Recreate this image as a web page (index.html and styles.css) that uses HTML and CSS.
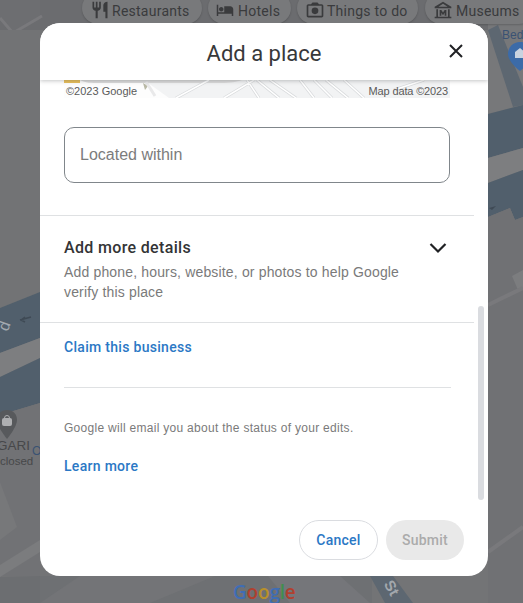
FILE: index.html
```html
<!DOCTYPE html>
<html lang="en">
<head>
<meta charset="utf-8">
<title>Add a place</title>
<link rel="stylesheet" href="styles.css">
</head>
<body>
<div class="map">
  <svg class="map-art" width="523" height="603" viewBox="0 0 523 603">
    <rect width="523" height="603" fill="#737476"/>
    <polygon points="0,0 523,0 523,30 0,30" fill="#6b6c6f"/>
    <polygon points="0,18 13,33 40,18 40,0 0,0" fill="#6d6e71"/>
    <polygon points="30,44 40,38 40,100 30,60" fill="#6f7073"/>
    <path d="M0 18 13 33 42 16M30 44l12-7" stroke="#79797c" stroke-width="3" fill="none"/>
    <polygon points="0,30 40,30 40,292 0,308" fill="#727375"/>
    <polygon points="0,308 40,292 40,338 0,353" fill="#515f6c"/>
    <polygon points="0,353 40,338 40,358 0,377" fill="#7d7e80"/>
    <polygon points="0,377 40,358 40,403 0,415" fill="#515f6c"/>
    <polygon points="0,415 40,403 40,576 0,576" fill="#717275"/>
    <polygon points="0,482 17,527 0,540" fill="#77787a"/>
    <polygon points="0,565 40,540 40,552 0,577" fill="#7b7c7e"/>
    <polygon points="0,577 40,576 40,603 0,603" fill="#6c6e71"/>
    <polygon points="488,23 523,23 523,105 488,114" fill="#77787a"/>
    <polygon points="488,30 498,25 523,87 523,105 513,107" fill="#5d6771"/>
    <polygon points="488,114 523,105 523,148 488,158" fill="#515f6c"/>
    <polygon points="488,158 523,148 523,170 488,183" fill="#7d7e80"/>
    <polygon points="488,183 523,170 523,217 515,220 510,208 488,217" fill="#515f6c"/>
    <polygon points="488,217 510,208 515,220 523,217 523,603 488,603" fill="#707174"/>
    <polygon points="512,276 523,270 523,290 518,290" fill="#7c7d7f"/>
    <path d="M488 305 523 288M488 552 523 527" stroke="#79797c" stroke-width="4" fill="none"/>
    <polygon points="40,576 372,576 372,603 40,603" fill="#6e7073"/>
    <polygon points="80,576 215,576 150,603 40,603" fill="#737477"/>
    <polygon points="268,576 340,576 370,603 290,603" fill="#75767a"/>
    <polygon points="370,576 393,576 413,603 385,603" fill="#5d6771"/>
    <path d="M520 42c-7 0-12 5-12 12 0 8 12 17 12 17s12-9 12-17c0-7-5-12-12-12z" fill="#3c6ba8"/>
    <path d="M515 58v-6l5-4 5 4v6z" fill="#c9d3e0"/>
    <path d="M7 410c-6 0-10 4-10 10 0 7 10 19 10 19s10-12 10-19c0-6-4-10-10-10z" fill="#57595c"/>
    <rect x="2" y="418" width="10" height="8" rx="2" fill="#aeafb1"/>
    <path d="M4.500 418a2.500 2.500 0 0 1 5 0" stroke="#aeafb1" fill="none"/>
    <path d="M20 320l11-3M21 320l4-3M21 320l4 2" stroke="#3f4a55" stroke-width="1.500" fill="none"/>
    <path d="M489 208l7-2-4 4z" fill="#3f4a55"/>
  </svg>
  <span class="map-label label-road-left">d</span>
  <span class="map-label label-gari">GARI</span>
  <span class="map-label label-closed">closed</span>
  <span class="map-label label-op">Op</span>
  <span class="map-label label-bed">Bed</span>
  <span class="map-label label-st">St</span>
  <div class="pills">
    <div class="pill pill-restaurants">
      <svg class="pill-icon" viewBox="0 0 24 24"><path d="M11 9H9V2H7v7H5V2H3v7c0 2.100 1.700 3.900 3.750 4V22h2.500v-9C11.300 12.900 13 11.100 13 9V2h-2v7zm5-3v8h2.500v8H21V2c-2.800 0-5 2.200-5 4z"/></svg>
      <span>Restaurants</span>
    </div>
    <div class="pill pill-hotels">
      <svg class="pill-icon" viewBox="0 0 24 24"><path d="M7 14c1.700 0 3-1.300 3-3S8.700 8 7 8s-3 1.300-3 3 1.300 3 3 3zm12-7h-8v8H3V5H1v15h2v-3h18v3h2v-9c0-2.200-1.800-4-4-4z"/></svg>
      <span>Hotels</span>
    </div>
    <div class="pill pill-things">
      <svg class="pill-icon" viewBox="0 0 24 24"><path d="M20 5h-3.200L15 3H9L7.200 5H4c-1.100 0-2 .9-2 2v12c0 1.100.9 2 2 2h16c1.100 0 2-.9 2-2V7c0-1.100-.9-2-2-2zm0 14H4V7h16v12z"/><circle cx="12" cy="13" r="4"/></svg>
      <span>Things to do</span>
    </div>
    <div class="pill pill-museums">
      <svg class="pill-icon" viewBox="0 0 24 24"><path d="M12 2 2 8v2h20V8L12 2zm0 2.400L17.500 8h-11L12 4.400zM4 11v9H2v2h20v-2h-2v-9h-2v9H6v-9H4z"/><path d="M8 12h2l2 3 2-3h2v7h-2v-3.600l-2 2.800-2-2.800V19H8z"/></svg>
      <span>Museums</span>
    </div>
  </div>
  <div class="google-logo"><span class="g-blue">G</span><span class="g-red">o</span><span class="g-yellow">o</span><span class="g-blue">g</span><span class="g-green">l</span><span class="g-red">e</span></div>
</div>

<section class="modal">
  <header class="modal-header">
    <h1 class="modal-title">Add a place</h1>
    <button class="close-btn" aria-label="Close">
      <svg viewBox="0 0 16 16" width="16" height="16"><path d="M2 2l12 12M14 2 2 14" stroke="#202124" stroke-width="2" fill="none"/></svg>
    </button>
  </header>
  <div class="modal-body">
    <div class="map-strip">
      <svg class="strip-art" viewBox="0 0 386 18" width="386" height="18">
        <rect width="386" height="18" fill="#f2f3f4"/>
        <polygon points="0,0 80,0 105,18 0,18" fill="#fdfdfd"/>
        <rect width="16" height="3" fill="#e8bf5a"/>
        <path d="M16 0c6 3 10 3 20 3h120c12 0 16-1 22-3z" fill="#dcdcdc"/>
        <path d="M112 18 145 0M160 18l30-18M195 18l-12-18M215 18l-22-18M232 18l-26-18M250 18l-14-18M268 18l-18-18M284 18l-22-18M300 18l-20-18M330 10l30-10" stroke="#d9dbdd" stroke-width="3" fill="none"/>
        <path d="M112 18 145 0M160 18l30-18M195 18l-12-18M215 18l-22-18M232 18l-26-18M250 18l-14-18M268 18l-18-18M284 18l-22-18M300 18l-20-18M330 10l30-10" stroke="#fff" stroke-width="1.500" fill="none"/>
        <path d="M79 3l2 7 3-4z" fill="#b9b9a6"/>
        <path d="M82 2l4 6 5 8" stroke="#e9e9ea" stroke-width="3" fill="none"/>
      </svg>
      <div class="strip-text">
        <span>©2023 Google</span>
        <span class="strip-right">Map data ©2023</span>
      </div>
    </div>
    <div class="field"><span class="field-label">Located within</span></div>
    <div class="rule rule-full rule-first"></div>
    <div class="details">
      <div class="details-head">
        <h2 class="details-title">Add more details</h2>
        <svg class="chevron" viewBox="0 0 18 12" width="18" height="12"><path d="M1.500 2 9 9.500 16.500 2" stroke="#202124" stroke-width="2.200" fill="none"/></svg>
      </div>
      <p class="details-text">Add phone, hours, website, or photos to help Google verify this place</p>
    </div>
    <div class="rule rule-full"></div>
    <a class="link claim" href="#">Claim this business</a>
    <div class="rule rule-inset"></div>
    <p class="notice">Google will email you about the status of your edits.</p>
    <a class="link learn" href="#">Learn more</a>
    <div class="scrollbar"></div>
  </div>
  <footer class="modal-footer">
    <button class="btn btn-cancel">Cancel</button>
    <button class="btn btn-submit">Submit</button>
  </footer>
</section>
</body>
</html>
```
FILE: styles.css
```css
* { box-sizing: border-box; }
html, body { margin: 0; padding: 0; }
body {
  position: relative;
  width: 523px;
  height: 603px;
  overflow: hidden;
  font-family: "Liberation Sans", Arial, sans-serif;
  background: #737476;
}
.map { position: absolute; inset: 0; overflow: hidden; }
.map-art { display: block; }
.map-label { position: absolute; line-height: 14px; white-space: nowrap; }
.label-road-left { left: 0; top: 319px; font-size: 16px; color: #a2a9b0; transform: rotate(-70deg); }
.label-gari { left: -3px; top: 439px; font-size: 13.500px; color: #47484a; }
.label-closed { left: 0; top: 454px; font-size: 11.500px; color: #47484a; }
.label-op { left: 32px; top: 444px; font-size: 12px; color: #3a5273; }
.label-bed { left: 502px; top: 28px; font-size: 12px; color: #3a5273; }
.label-st { left: 384px; top: 581px; font-size: 15px; font-weight: 700; color: #a3a8ad; transform: rotate(60deg); }
.pills { position: absolute; inset: 0; }
.pill {
  position: absolute;
  top: -8px;
  height: 32px;
  display: flex;
  align-items: center;
  gap: 2.500px;
  padding: 0 0 0 7.500px;
  border-radius: 16px;
  background: #78797b;
  box-shadow: 0 1px 2px rgba(0, 0, 0, .18);
  font-family: Roboto, sans-serif;
  font-size: 14px;
  letter-spacing: .25px;
  color: #3a3b3d;
  white-space: nowrap;
}
.pill > span { position: relative; top: 3px; }
.pill-icon { width: 20px; height: 20px; fill: #3a3b3d; position: relative; top: 2px; flex: none; }
.pill-restaurants { left: 82px; width: 120px; }
.pill-hotels { left: 208px; width: 83px; padding-left: 8px; gap: 4px; }
.pill-hotels .pill-icon { width: 18px; height: 18px; }
.pill-things { left: 297px; width: 121px; }
.pill-museums { left: 425px; width: 110px; gap: 3.500px; }
.google-logo {
  position: absolute;
  left: 233px;
  top: 580px;
  font-family: "Open Sans", sans-serif;
  font-size: 19px;
  line-height: 24px;
  font-weight: 600;
  letter-spacing: -.2px;
}
.g-blue { color: #3f6db5; }
.g-red { color: #b0402f; }
.g-yellow { color: #b8902a; }
.g-green { color: #3f8f4f; }

.modal {
  position: absolute;
  left: 40px;
  top: 23px;
  width: 448px;
  height: 553px;
  display: flex;
  flex-direction: column;
  background: #fff;
  border-radius: 20px;
  overflow: hidden;
}
.modal-header {
  position: relative;
  flex: none;
  height: 57px;
  display: flex;
  align-items: center;
  justify-content: center;
  padding-top: 4px;
  background: #fff;
  box-shadow: 0 1px 4px rgba(60, 64, 67, .3);
  z-index: 1;
}
.modal-title {
  margin: 0;
  font-family: Roboto, sans-serif;
  font-size: 22px;
  font-weight: 400;
  color: #37383a;
}
.close-btn {
  position: absolute;
  right: 24px;
  top: 20px;
  width: 16px;
  height: 16px;
  padding: 0;
  border: 0;
  background: none;
  display: block;
}
.close-btn svg { display: block; }
.modal-body { position: relative; flex: 1; min-height: 0; overflow: hidden; }
.map-strip { position: relative; margin-left: 24px; width: 386px; height: 18px; }
.strip-art { display: block; }
.strip-text {
  position: absolute;
  inset: 4px 2px 0 2px;
  display: flex;
  justify-content: space-between;
  font-size: 11px;
  line-height: 14px;
  color: #5a5a5a;
}
.strip-right { letter-spacing: -.15px; }
.field {
  margin: 29px 0 0 24px;
  width: 386px;
  height: 56px;
  display: flex;
  align-items: center;
  padding-left: 15px;
  border: 1px solid #80868b;
  border-radius: 10px;
}
.field-label { font-size: 16px; color: #7c7c7c; }
.rule { height: 1px; background: #dfe1e3; }
.rule-full { width: 434px; }
.rule-first { margin-top: 32px; }
.rule-inset { width: 387px; margin: 31px 0 0 24px; }
.details { padding: 22px 24px 19px 24px; height: 106px; }
.details-head { display: flex; justify-content: space-between; align-items: center; height: 19px; padding-right: 17px; }
.details-title { margin: 0; font-family: Roboto, sans-serif; font-size: 16px; font-weight: 500; color: #333436; letter-spacing: .34px; }
.chevron { display: block; }
.details-text { margin: 5px 0 0; width: 350px; font-size: 14px; line-height: 20px; color: #7a7a7a; letter-spacing: .16px; }
.link { display: block; font-family: Roboto, sans-serif; font-size: 14px; font-weight: 500; color: #2b78c5; letter-spacing: .3px; text-decoration: none; }
.claim { margin: 15px 0 0 24px; line-height: 18px; }
.notice { margin: 33px 0 0 24px; font-size: 12px; line-height: 14px; color: #7a7a7a; letter-spacing: .29px; }
.learn { margin: 22px 0 0 24px; line-height: 18px; }
.scrollbar {
  position: absolute;
  left: 438px;
  top: 226px;
  width: 6px;
  height: 194px;
  border-radius: 3px;
  background: #dadce0;
}
.modal-footer {
  flex: none;
  height: 56px;
  display: flex;
  justify-content: flex-end;
  gap: 8px;
  padding: 0 24px 16px 0;
}
.btn {
  height: 40px;
  border-radius: 20px;
  font-family: Roboto, sans-serif;
  font-size: 14px;
  font-weight: 500;
  padding: 0;
  letter-spacing: .25px;
}
.btn-cancel { width: 79px; border: 1px solid #dadce0; background: #fff; color: #2b78c5; }
.btn-submit { width: 78px; border: 0; background: #e9e9e9; color: #ababab; }
```
